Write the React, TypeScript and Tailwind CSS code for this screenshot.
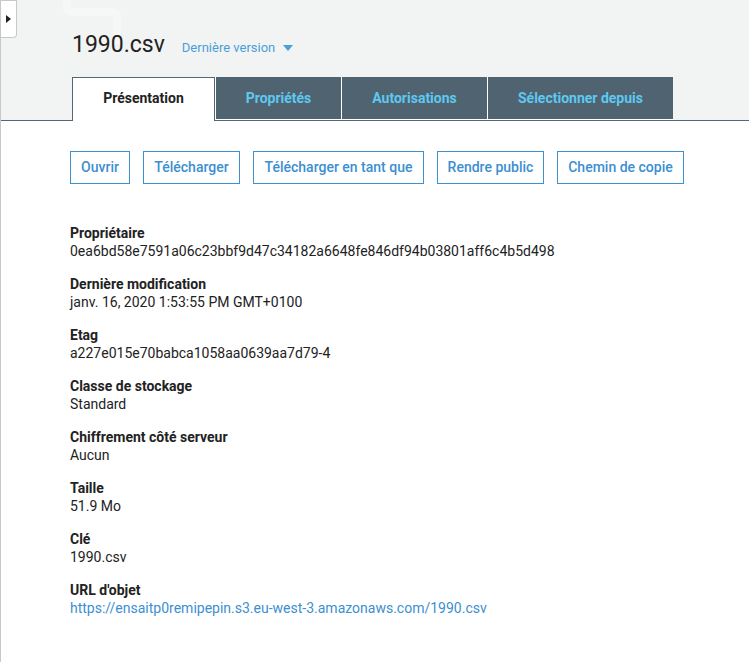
import React from "react";

const TABS = ["Propriétés", "Autorisations", "Sélectionner depuis"];
const TAB_WIDTHS = ["w-[126px]", "w-[146px]", "w-[186px]"];

const ACTIONS = [
  { label: "Ouvrir", w: "w-[60px]" },
  { label: "Télécharger", w: "w-[97px]" },
  { label: "Télécharger en tant que", w: "w-[171px]" },
  { label: "Rendre public", w: "w-[107px]" },
  { label: "Chemin de copie", w: "w-[127px]" },
];

const PROPERTIES: { label: string; value: string; link?: boolean }[] = [
  { label: "Propriétaire", value: "0ea6bd58e7591a06c23bbf9d47c34182a6648fe846df94b03801aff6c4b5d498" },
  { label: "Dernière modification", value: "janv. 16, 2020 1:53:55 PM GMT+0100" },
  { label: "Etag", value: "a227e015e70babca1058aa0639aa7d79-4" },
  { label: "Classe de stockage", value: "Standard" },
  { label: "Chiffrement côté serveur", value: "Aucun" },
  { label: "Taille", value: "51.9 Mo" },
  { label: "Clé", value: "1990.csv" },
  { label: "URL d'objet", value: "https://ensaitp0remipepin.s3.eu-west-3.amazonaws.com/1990.csv", link: true },
];

function Header() {
  return (
    <div className="relative h-[121px] bg-[#f2f3f3] border-b border-[#536874] pl-[71px] flex flex-col">
      {/* faint bucket watermark */}
      <svg className="absolute left-[58px] top-0" width="80" height="44" viewBox="0 0 80 44" fill="none">
        <path d="M8 0 V8 Q8 12 14 12 H52 Q58 12 58 18 V44" stroke="#f6f7f7" strokeWidth="8" />
      </svg>

      {/* sidebar toggle */}
      <button
        type="button"
        className="absolute left-0 top-0 w-[16px] h-[38px] bg-white border border-l-0 border-[#c8c8c8] rounded-br-[4px] flex items-center justify-center"
      >
        <svg width="5" height="8" viewBox="0 0 5 8">
          <path d="M0 0 L5 4 L0 8 Z" fill="#222" />
        </svg>
      </button>

      <div className="relative flex items-baseline pt-[30px] h-[77px]">
        <h1 className="text-[23px] leading-[30px] text-[#222]">1990.csv</h1>
        <button type="button" className="ml-[17px] flex items-center gap-[8px] text-[13px] text-[#4a9fd8]">
          Dernière version
          <svg width="10" height="6" viewBox="0 0 10 6">
            <path d="M0 0 H10 L5 6 Z" fill="#4a9fd8" />
          </svg>
        </button>
      </div>

      <div className="relative flex">
        <div className="w-[143px] h-[44px] -mb-px pb-[2px] bg-white border border-b-0 border-[#536874] flex items-center justify-center text-[14px] font-bold text-[#222]">
          Présentation
        </div>
        {TABS.map((t, i) => (
          <div
            key={t}
            className={`${TAB_WIDTHS[i]} h-[43px] bg-[#4f6470] border-l border-b border-white flex items-center justify-center text-[14px] font-bold text-[#5ec8f0]`}
          >
            {t}
          </div>
        ))}
      </div>
    </div>
  );
}

export default function App() {
  return (
    <div className="min-h-screen bg-white border-l border-[#c8c8c8] font-['Roboto',sans-serif]">
      <Header />
      <div className="pl-[69px] pt-[30px]">
        <div className="flex gap-[13px]">
          {ACTIONS.map((a) => (
            <button
              key={a.label}
              type="button"
              className={`${a.w} h-[33px] border border-[#3c91cf] text-[14px] font-medium text-[#3c8fd0] whitespace-nowrap`}
            >
              {a.label}
            </button>
          ))}
        </div>

        <div className="mt-[40px]">
          {PROPERTIES.map((p) => (
            <div key={p.label} className="mb-[15px] text-[14px] leading-[18px]">
              <div className="font-bold text-[#222]">{p.label}</div>
              {p.link ? (
                <a href="#" className="text-[#3c8fd0]">{p.value}</a>
              ) : (
                <div className="text-[#222]">{p.value}</div>
              )}
            </div>
          ))}
        </div>
      </div>
    </div>
  );
}
